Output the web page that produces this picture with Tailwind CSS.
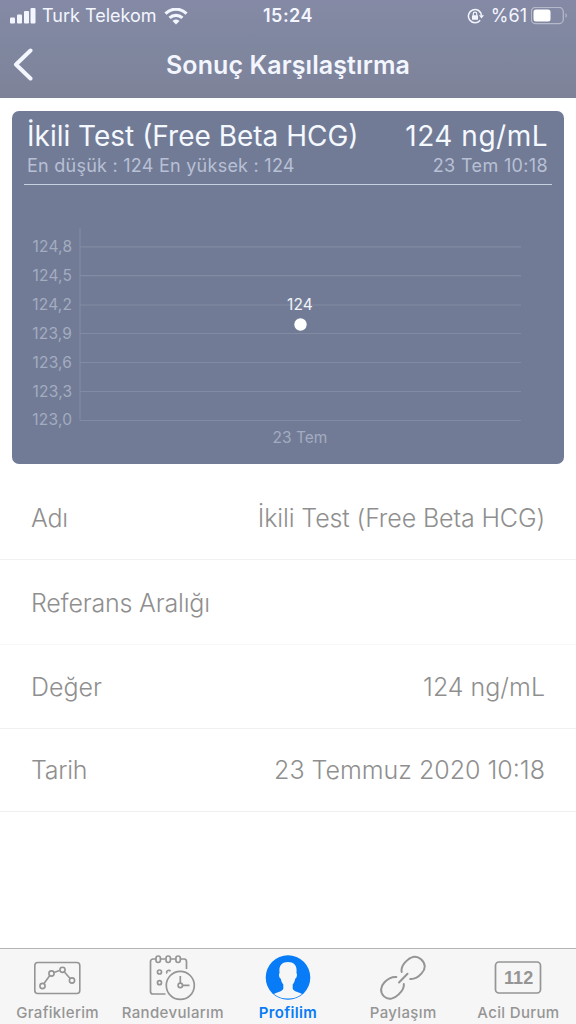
<!DOCTYPE html>
<html lang="tr">
<head>
  <meta charset="UTF-8">
  <meta name="viewport" content="width=device-width, initial-scale=1.0">
  <title>Sonuç Karşılaştırma</title>
  <script src="https://cdn.jsdelivr.net/npm/@tailwindcss/browser@4"></script>
</head>
<body class="bg-white font-['Inter',sans-serif]">
  <div class="flex h-[1024px] w-[576px] flex-col overflow-hidden whitespace-nowrap">
    <!-- Header -->
    <header class="h-[98px] shrink-0 bg-linear-to-b from-[#8589a5] via-[#7f879f] to-[#7e8299] text-[#f3f6ff]">
      <div class="grid h-8 grid-cols-3 items-center pl-2.5 pr-2">
        <div class="flex items-center">
          <svg class="mr-1.5 h-4 w-[26px]" viewBox="0 0 26 16" fill="currentColor">
            <rect x="0" y="9.500" width="5" height="6" rx="1"/>
            <rect x="7" y="6.500" width="5" height="9" rx="1"/>
            <rect x="14" y="3" width="5" height="12.500" rx="1"/>
            <rect x="20.500" y="0" width="5" height="15.500" rx="1"/>
          </svg>
          <span class="text-[18px] leading-8">Turk Telekom</span>
          <svg class="ml-[7px] h-[17px] w-6 shrink-0" viewBox="0 0 24 17" fill="none" stroke="currentColor" stroke-width="3.200">
            <path d="M1.500 5.700C7.500-.3 16.500-.3 22.500 5.700"/>
            <path d="M5.600 9.900C9.200 6.400 14.800 6.400 18.400 9.900"/>
            <path d="M8.500 13C10.500 11 13.500 11 15.500 13L12 16.500Z" fill="currentColor" stroke="none"/>
          </svg>
        </div>
        <div class="pr-0.5 text-center text-[18px] font-semibold leading-8 tracking-[0.5px]">15:24</div>
        <div class="flex items-center justify-end">
          <svg class="mr-[7px] h-4 w-[17px]" viewBox="0 0 17 16" fill="none" stroke="currentColor" stroke-width="1.500">
            <path d="M13.200 12.200A6.600 6.600 0 1 1 14.600 7.500"/>
            <path d="M12 7.200h5l-2.500 3.300z" fill="currentColor" stroke="none"/>
            <rect x="5" y="7.200" width="6" height="4.600" rx=".6" fill="currentColor" stroke="none"/>
            <path d="M6.300 7.500V5.800a1.700 1.700 0 0 1 3.400 0v1.700" stroke-width="1.200"/>
          </svg>
          <span class="text-[18px] leading-8">%61</span>
          <svg class="ml-1 h-[18px] w-[37px]" viewBox="0 0 37 18" fill="none">
            <rect x=".3" y=".3" width="32" height="16.400" rx="4.500" stroke="#b5b9ca" stroke-width="1.300"/>
            <rect x="2.500" y="2.500" width="17" height="12" rx="2.500" fill="#fff"/>
            <path d="M34.500 6c1.800.8 1.800 4.200 0 5z" fill="#b5b9ca"/>
          </svg>
        </div>
      </div>
      <div class="grid h-[66px] grid-cols-[100px_1fr_100px] items-center">
        <svg class="ml-3 h-[34px] w-[22px]" viewBox="0 0 22 34" fill="none" stroke="currentColor" stroke-width="4" stroke-linecap="round" stroke-linejoin="round">
          <path d="M18.500 2.500 4 16.500l14.500 14"/>
        </svg>
        <h1 class="pt-0.5 text-center text-[25px] font-semibold tracking-[0.1px]">Sonuç Karşılaştırma</h1>
      </div>
    </header>

    <!-- Chart card -->
    <section class="mx-3 mt-[13px] h-[353px] w-[552px] shrink-0 rounded-[7px] bg-[#717b95] px-3">
      <div class="flex h-[74px] flex-col border-b border-[#c8d1e2] pl-[3px] pr-1 pt-[9px]">
        <div class="flex justify-between text-[28px] leading-8 text-[#f4f8ff]">
          <h2>İkili Test (Free Beta HCG)</h2>
          <span class="tracking-[0.5px]">124 ng/mL</span>
        </div>
        <div class="flex justify-between text-[18px] leading-[27px] tracking-[0.25px] text-[#b8c0d5]">
          <span>En düşük : 124 En yüksek : 124</span>
          <span class="tracking-[0.35px]">23 Tem 10:18</span>
        </div>
      </div>
      <svg class="h-[279px] w-[528px]" viewBox="24 185 528 279">
        <g stroke="#818ba3" stroke-width="1.200">
          <path d="M80 228V420.500"/>
          <path d="M80 246.800H521M80 275.700H521M80 305H521M80 333.500H521M80 362.500H521M80 391.500H521M80 420.500H521"/>
        </g>
        <g fill="#a3acc1" font-size="15.500" text-anchor="end" letter-spacing=".2">
          <text x="72.200" y="251.500">124,8</text>
          <text x="72.200" y="280.500">124,5</text>
          <text x="72.200" y="309.500">124,2</text>
          <text x="72.200" y="338.500">123,9</text>
          <text x="72.200" y="367.500">123,6</text>
          <text x="72.200" y="396.500">123,3</text>
          <text x="72.200" y="425">123,0</text>
        </g>
        <text x="300" y="442.500" fill="#a3acc1" font-size="15.500" text-anchor="middle">23 Tem</text>
        <text x="300" y="310" fill="#f2f4fa" font-size="15.500" text-anchor="middle" letter-spacing=".2">124</text>
        <circle cx="300.500" cy="324.500" r="6.200" fill="#fff"/>
      </svg>
    </section>

    <!-- Result details -->
    <dl class="mt-[11px] text-[25px] font-light leading-8 text-[#8f8f8f]">
      <div class="flex h-[85px] items-center justify-between border-b border-[#f1f1f1] px-[31px] pt-0.5">
        <dt class="tracking-[-0.3px]">Adı</dt>
        <dd class="tracking-[-0.12px]">İkili Test (Free Beta HCG)</dd>
      </div>
      <div class="flex h-[85px] items-center justify-between border-b border-[#f6f6f6] px-[31px] pt-0.5">
        <dt class="tracking-[-0.2px]">Referans Aralığı</dt>
      </div>
      <div class="flex h-[84px] items-center justify-between border-b border-[#f0f0f0] px-[31px]">
        <dt>Değer</dt>
        <dd>124 ng/mL</dd>
      </div>
      <div class="flex h-[83px] items-center justify-between border-b border-[#f0f0f0] px-[31px]">
        <dt class="tracking-[-0.3px]">Tarih</dt>
        <dd>23 Temmuz 2020 10:18</dd>
      </div>
    </dl>

    <!-- Tab bar -->
    <nav class="mt-auto grid h-[76px] shrink-0 grid-cols-5 border-t border-[#b4b4b4] bg-[#f6f6f6] text-[15px] font-medium leading-5 tracking-[0.35px] text-[#959595]">
      <a class="flex flex-col items-center pt-1.5">
        <svg class="h-12 w-12" viewBox="0 0 48 48" fill="none" stroke="currentColor" stroke-width="1.600">
          <rect x=".8" y="7.500" width="45" height="31" rx="3"/>
          <path d="M10 28.500 15.800 20.500M20 17.400 25.500 15.500M30.200 16.800 35.900 23.300"/>
          <circle cx="8.500" cy="31" r="2.600"/>
          <circle cx="17.500" cy="18.500" r="2.600"/>
          <circle cx="28.500" cy="14.800" r="2.600"/>
          <circle cx="38" cy="25.500" r="2.600"/>
        </svg>
        <span>Grafiklerim</span>
      </a>
      <a class="flex flex-col items-center pt-1.5">
        <svg class="h-12 w-12" viewBox="0 0 48 48" fill="none" stroke="currentColor" stroke-width="1.700">
          <path d="M7 4H4a2.500 2.500 0 0 0-2.500 2.500v30A2.500 2.500 0 0 0 4 39H16.500M12 4h4.500M21.500 4h5M31.500 4h3.500a2.500 2.500 0 0 1 2.500 2.500V14"/>
          <rect x="7" y="1" width="4.400" height="6.500" rx="2.200"/>
          <rect x="17" y="1" width="4.400" height="6.500" rx="2.200"/>
          <rect x="26.900" y="1" width="4.400" height="6.500" rx="2.200"/>
          <circle cx="10.500" cy="17" r="2"/>
          <path d="M18 18.500A2 2 0 1 1 21.500 16.300"/>
          <circle cx="10.500" cy="27.700" r="2"/>
          <circle cx="31.300" cy="30.400" r="14"/>
          <circle cx="31.300" cy="30.400" r="2.200"/>
          <path d="M31.300 21v7.200M33.500 30.400h7"/>
        </svg>
        <span>Randevularım</span>
      </a>
      <a class="flex flex-col items-center pt-1.5 text-[#087cf7]">
        <svg class="h-12 w-12" viewBox="0 0 48 48">
          <circle cx="24" cy="22.500" r="22.300" fill="currentColor"/>
          <path d="M24 7c-5.500 0-8.800 3.200-8.600 8.700l.2 2.500c-1.200.3-.5 4.800 1.200 5.500.4 2.400 1.200 4.300 2.500 5.800v4.300c-1.200 2.800-6 3.300-9.300 5.200A21.500 21.500 0 0 0 24 43.500a21.500 21.500 0 0 0 14-4.500c-3.300-1.900-8.100-2.400-9.300-5.200v-4.300c1.300-1.500 2.100-3.400 2.500-5.800 1.700-.7 2.400-5.200 1.200-5.500l.2-2.500C32.800 10.200 29.500 7 24 7z" fill="#f6f6f6"/>
        </svg>
        <span class="font-semibold">Profilim</span>
      </a>
      <a class="flex flex-col items-center pt-1.5">
        <svg class="h-12 w-12" viewBox="0 0 48 48" fill="none" stroke="currentColor" stroke-width="2" stroke-linecap="round">
          <path d="M22.700 17C21.800 13 23.800 9.800 26.500 6.800 31 2 37-.2 42 4.200c5 4.400 4.800 9.800.6 14.200-3 3.400-6.200 6-11.400 5.600"/>
          <path d="M17.300 22C12 21.600 8.600 24 5.500 27.300 1.500 31.500.6 37.200 5 41.400c4.600 4.300 10.500 2.300 14.700-2 3.300-3.300 6-6.200 5.100-10.400"/>
          <path d="M20 27.500 28.500 18.800"/>
        </svg>
        <span>Paylaşım</span>
      </a>
      <a class="flex flex-col items-center pt-1.5">
        <svg class="h-12 w-12" viewBox="0 0 48 48">
          <rect x="1.500" y="7" width="45" height="31" rx="3.500" fill="none" stroke="currentColor" stroke-width="1.700"/>
          <text x="24.700" y="29" fill="currentColor" font-size="18" font-weight="700" letter-spacing=".2" text-anchor="middle" font-family="Liberation Sans, sans-serif">112</text>
        </svg>
        <span>Acil Durum</span>
      </a>
    </nav>
  </div>
</body>
</html>
